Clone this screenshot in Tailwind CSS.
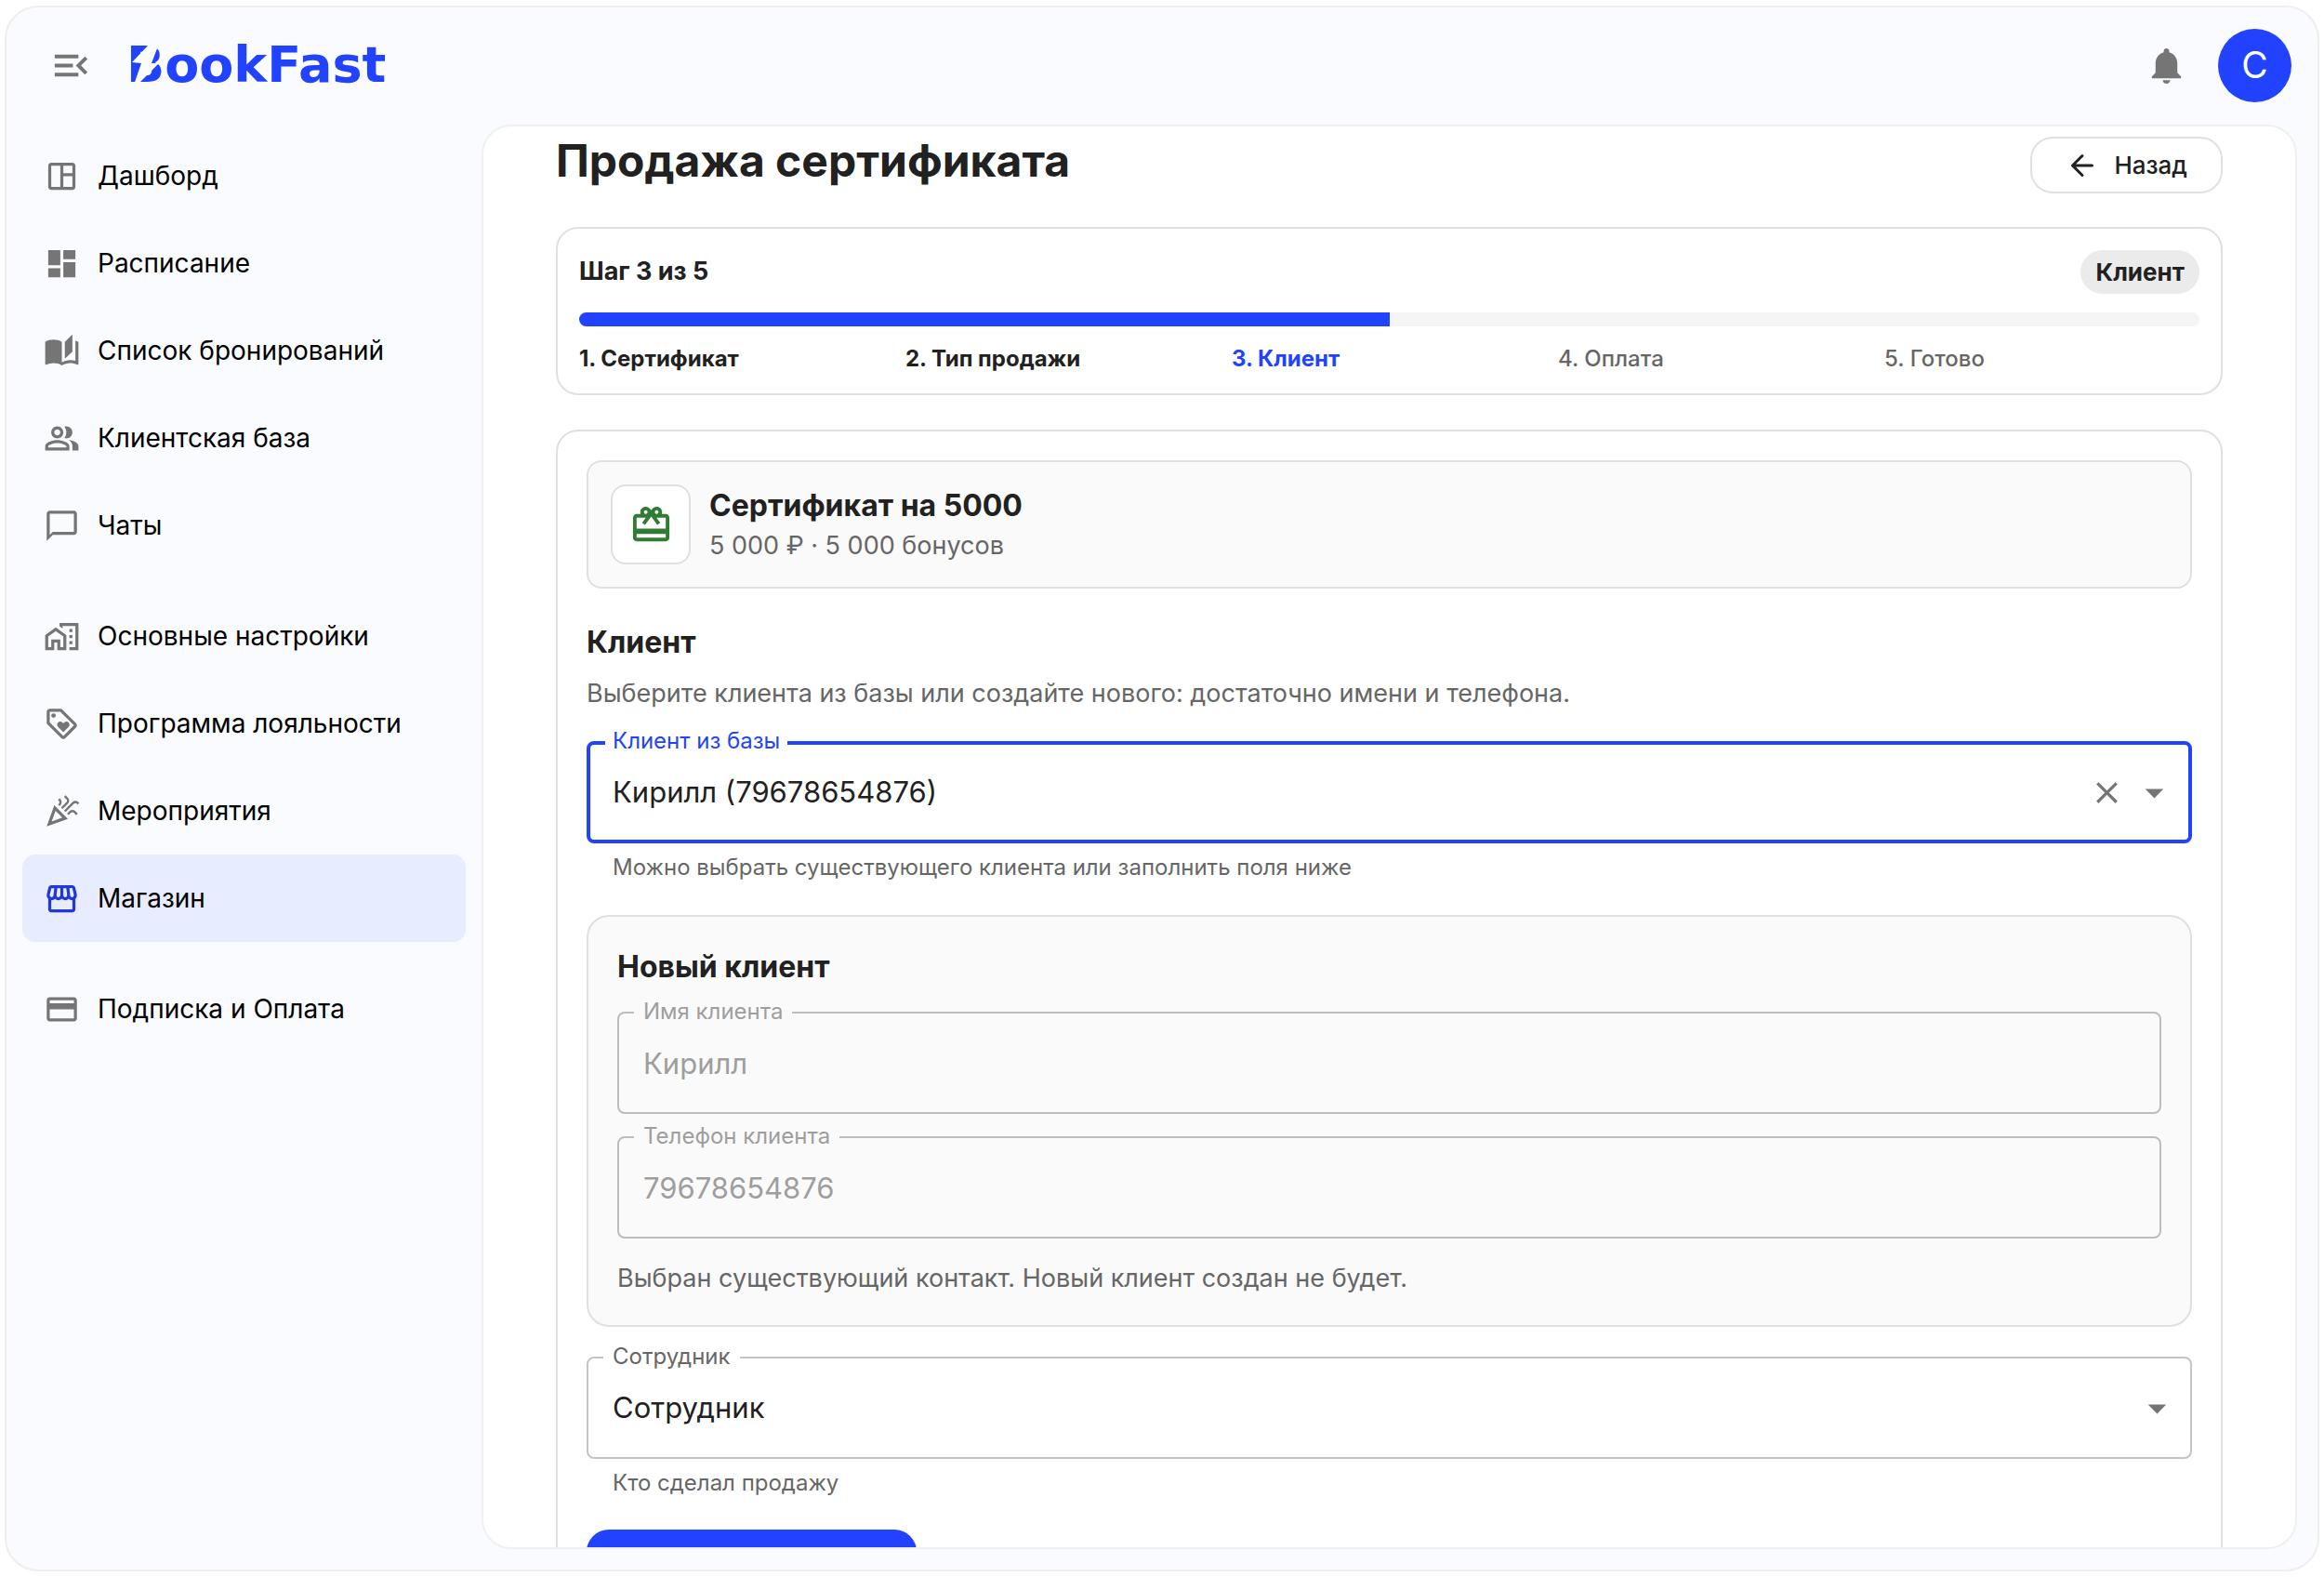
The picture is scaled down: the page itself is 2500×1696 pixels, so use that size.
<!DOCTYPE html>
<html lang="ru">
<head>
    <meta charset="UTF-8">
    <meta name="viewport" content="width=device-width, initial-scale=1.0">
    <title>Продажа сертификата - BookFast</title>
    <script src="https://cdn.jsdelivr.net/npm/@tailwindcss/browser@4"></script>
</head>
<body class="bg-white px-[5px] py-1.5 h-screen overflow-hidden font-['Inter','Liberation_Sans',sans-serif] text-[#212121]">
    <div class="h-full flex flex-col bg-[#fafbff] border-2 border-[#eeeeee] rounded-[36px] overflow-hidden">

        <!-- Header -->
        <header class="h-[126px] shrink-0 flex items-center justify-between pl-[46px] pr-7 pb-0.5">
            <div class="flex items-center gap-9">
                <button type="button" aria-label="Свернуть меню" class="text-[#757575]">
                    <svg class="size-[47px]" viewBox="0 0 24 24" fill="currentColor"><path d="M3 18h13v-2H3v2zm0-5h10v-2H3v2zm0-7v2h13V6H3zm18 9.59L17.42 12 21 8.41 19.59 7l-5 5 5 5L21 15.59z"/></svg>
                </button>
                <a href="#" class="relative font-['DejaVu_Sans',sans-serif] text-[54px] leading-[60px] font-bold text-[#2143ff]">
                    BookFast
                    <svg class="absolute left-0 top-0 w-[40px] h-[60px]" viewBox="0 0 40 60" fill="#fafbff"><path d="M25 7 6 27l10 1L8 51l5-1L35 28h-8l8-21z"/></svg>
                </a>
            </div>
            <div class="flex items-center gap-8">
                <button type="button" aria-label="Уведомления" class="text-[#757575]">
                    <svg class="size-[47px]" viewBox="0 0 24 24" fill="currentColor"><path d="M12 22c1.1 0 2-.9 2-2h-4c0 1.1.89 2 2 2zm6-6v-5c0-3.07-1.64-5.64-4.5-6.32V4c0-.83-.67-1.5-1.5-1.5s-1.5.67-1.5 1.5v.68C7.63 5.36 6 7.92 6 11v5l-2 2v1h16v-1l-2-2z"/></svg>
                </button>
                <button type="button" class="size-[79px] rounded-full bg-[#2143ff] text-white text-[39px]">C</button>
            </div>
        </header>

        <div class="flex flex-1 min-h-0 pr-[22px] pb-[22px]">
            <!-- Sidebar -->
            <nav class="w-[511px] shrink-0 px-[17px] pt-2 text-[28px] text-black">
                <ul class="mb-[25px]">
                    <li><a href="#" class="flex items-center h-[94px] px-[23px] gap-[19px] rounded-[14px]">
                        <svg class="size-[39px] text-[#757575]" viewBox="0 0 24 24" fill="currentColor"><path d="M19 3H5c-1.1 0-2 .9-2 2v14c0 1.1.9 2 2 2h14c1.1 0 2-.9 2-2V5c0-1.1-.9-2-2-2zM5 19V5h6v14H5zm14 0h-6v-7h6v7zm0-9h-6V5h6v5z"/></svg>
                        Дашборд
                    </a></li>
                    <li><a href="#" class="flex items-center h-[94px] px-[23px] gap-[19px] rounded-[14px]">
                        <svg class="size-[39px] text-[#757575]" viewBox="0 0 24 24" fill="currentColor"><path d="M3 13h8V3H3v10zm0 8h8v-6H3v6zm10 0h8V11h-8v10zm0-18v6h8V3h-8z"/></svg>
                        Расписание
                    </a></li>
                    <li><a href="#" class="flex items-center h-[94px] px-[23px] gap-[19px] rounded-[14px]">
                        <svg class="size-[39px] text-[#757575]" viewBox="0 0 24 24" fill="currentColor"><path d="m19 1-5 5v11l5-4.5V1zM1 6v14.65c0 .25.25.5.5.5.1 0 .15-.05.25-.05C3.1 20.45 5.05 20 6.5 20c1.95 0 4.05.4 5.5 1.5V6c-1.45-1.1-3.55-1.5-5.5-1.5S2.45 4.9 1 6zm22 13.5V6c-.6-.45-1.25-.75-2-1v13.5c-1.1-.35-2.3-.5-3.5-.5-1.7 0-4.15.65-5.5 1.5v2c1.35-.85 3.8-1.5 5.5-1.5 1.65 0 3.35.3 4.75 1.05.1.05.15.05.25.05.25 0 .5-.25.5-.5v-1.1z"/></svg>
                        Список бронирований
                    </a></li>
                    <li><a href="#" class="flex items-center h-[94px] px-[23px] gap-[19px] rounded-[14px]">
                        <svg class="size-[39px] text-[#757575]" viewBox="0 0 24 24" fill="currentColor"><path d="M16.67 13.13C18.04 14.06 19 15.32 19 17v3h4v-3c0-2.18-3.57-3.47-6.33-3.87zM15 12c2.21 0 4-1.79 4-4s-1.79-4-4-4c-.47 0-.91.1-1.33.24C14.5 5.27 15 6.58 15 8s-.5 2.73-1.33 3.76c.42.14.86.24 1.33.24zM9 12c2.21 0 4-1.79 4-4s-1.79-4-4-4-4 1.79-4 4 1.79 4 4 4zm0-6c1.1 0 2 .9 2 2s-.9 2-2 2-2-.9-2-2 .9-2 2-2zM9 13c-2.67 0-8 1.34-8 4v3h16v-3c0-2.66-5.33-4-8-4zm6 5H3v-.99C3.2 16.29 6.3 15 9 15s5.8 1.29 6 2v1z"/></svg>
                        Клиентская база
                    </a></li>
                    <li><a href="#" class="flex items-center h-[94px] px-[23px] gap-[19px] rounded-[14px]">
                        <svg class="size-[39px] text-[#757575]" viewBox="0 0 24 24" fill="currentColor"><path d="M20 2H4c-1.1 0-2 .9-2 2v18l4-4h14c1.1 0 2-.9 2-2V4c0-1.1-.9-2-2-2zm0 14H6l-2 2V4h16v12z"/></svg>
                        Чаты
                    </a></li>
                </ul>
                <ul class="mb-[25px]">
                    <li><a href="#" class="flex items-center h-[94px] px-[23px] gap-[19px] rounded-[14px]">
                        <svg class="size-[39px] text-[#757575]" viewBox="0 0 24 24" fill="currentColor"><path d="M17 11h2v2h-2zM17 7h2v2h-2zM17 15h2v2h-2zM10.500 3v2.300l2 1.430V5H21v14h-4v2h6V3zM8 6l-7 5v10h6v-5h2v5h6V11L8 6zm5 13h-2v-5H5v5H3v-7l5-3.500 5 3.500v7z"/></svg>
                        Основные настройки
                    </a></li>
                    <li><a href="#" class="flex items-center h-[94px] px-[23px] gap-[19px] rounded-[14px]">
                        <svg class="size-[39px] text-[#757575]" viewBox="0 0 24 24" fill="currentColor"><path d="M21.41 11.58l-9-9C12.05 2.22 11.55 2 11 2H4c-1.1 0-2 .9-2 2v7c0 .55.22 1.05.59 1.42l9 9c.36.36.86.58 1.41.58s1.05-.22 1.41-.59l7-7c.37-.36.59-.86.59-1.41s-.23-1.06-.59-1.42zM13 20.01 4 11V4h7v-.01l9 9-7 7.02z"/><circle cx="6.5" cy="6.5" r="1.5"/><path d="M8.9 12.55c0 .57.23 1.07.6 1.45l3.5 3.5 3.5-3.5c.37-.37.6-.89.6-1.45 0-1.13-.92-2.05-2.05-2.05-.57 0-1.08.23-1.45.6l-.6.6-.6-.59c-.37-.38-.89-.61-1.45-.61-1.13 0-2.05.92-2.05 2.05z"/></svg>
                        Программа лояльности
                    </a></li>
                    <li><a href="#" class="flex items-center h-[94px] px-[23px] gap-[19px] rounded-[14px]">
                        <svg class="size-[39px] text-[#757575]" viewBox="0 0 24 24" fill="currentColor"><path d="m2 22 14-5-9-9-5 14zm10.350-5.820L5.300 18.700l2.520-7.050 4.530 4.530zM14.530 12.530l5.590-5.590c.49-.49 1.280-.49 1.770 0l.59.59 1.060-1.060-.59-.59c-1.070-1.070-2.820-1.070-3.890 0l-5.590 5.590 1.060 1.060zM10.060 6.880l-.59.59 1.060 1.060.59-.59c1.070-1.070 1.070-2.820 0-3.890l-.59-.59-1.060 1.070.59.59c.48.48.48 1.280 0 1.760zM17.060 11.880l-1.590 1.590 1.060 1.060 1.590-1.590c.49-.49 1.280-.49 1.770 0l1.610 1.610 1.060-1.060-1.610-1.610c-1.080-1.070-2.820-1.070-3.900 0zM15.060 5.880l-3.590 3.590 1.060 1.060 3.590-3.590c1.070-1.070 1.070-2.820 0-3.890l-1.590-1.590-1.060 1.060 1.590 1.590c.49.49.49 1.290 0 1.770z"/></svg>
                        Мероприятия
                    </a></li>
                    <li><a href="#" aria-current="page" class="flex items-center h-[94px] px-[23px] gap-[19px] rounded-[14px] bg-[#e7edff]">
                        <svg class="size-[39px] text-[#2138d6]" viewBox="0 0 24 24" fill="currentColor"><path d="M21.9 8.89l-1.05-4.37c-.22-.9-1-1.52-1.91-1.52H5.05c-.9 0-1.69.63-1.9 1.52L2.1 8.89c-.24 1.02-.02 2.06.62 2.88.08.11.19.19.28.29V19c0 1.1.9 2 2 2h14c1.1 0 2-.9 2-2v-6.94c.09-.09.2-.18.28-.28.64-.82.87-1.87.62-2.89zm-2.99-3.9 1.05 4.37c.1.42.01.84-.25 1.17-.14.18-.44.47-.94.47-.61 0-1.14-.49-1.21-1.14L16.98 5l1.93-.01zM13 5h1.96l.54 4.52c.05.39-.07.78-.33 1.07-.22.26-.54.41-.95.41-.67 0-1.22-.59-1.22-1.31V5zM8.49 9.52 9.04 5H11v4.69c0 .72-.55 1.31-1.29 1.31-.34 0-.65-.15-.89-.41-.25-.29-.37-.68-.33-1.07zm-4.45-.16L5.05 5h1.97l-.58 4.86c-.08.65-.6 1.14-1.21 1.14-.49 0-.8-.29-.93-.47-.27-.32-.36-.75-.26-1.17zM5 19v-6.03c.08.01.15.03.23.03.87 0 1.66-.36 2.24-.95.6.6 1.4.95 2.31.95.87 0 1.65-.36 2.23-.93.59.57 1.39.93 2.29.93.84 0 1.64-.35 2.24-.95.58.59 1.37.95 2.24.95.08 0 .15-.02.23-.03V19H5z"/></svg>
                        Магазин
                    </a></li>
                </ul>
                <ul>
                    <li><a href="#" class="flex items-center h-[94px] px-[23px] gap-[19px] rounded-[14px]">
                        <svg class="size-[39px] text-[#757575]" viewBox="0 0 24 24" fill="currentColor"><path d="M20 4H4c-1.11 0-1.99.89-1.99 2L2 18c0 1.11.89 2 2 2h16c1.11 0 2-.89 2-2V6c0-1.11-.89-2-2-2zm0 14H4v-6h16v6zm0-10H4V6h16v2z"/></svg>
                        Подписка и Оплата
                    </a></li>
                </ul>
            </nav>

            <!-- Content -->
            <main class="flex-1 min-w-0 bg-white border-2 border-[#f0f0f0] rounded-[32px] px-[78px] pt-[11px] overflow-hidden">
                <div class="flex items-start justify-between h-[61px] mb-9">
                    <h1 class="text-[48px] leading-[52px] font-bold">Продажа сертификата</h1>
                    <button type="button" class="flex items-center gap-4 h-[61px] px-9 border-2 border-[#e0e0e0] rounded-[24px] text-[26px] font-medium">
                        <svg class="size-9" viewBox="0 0 24 24" fill="none" stroke="currentColor" stroke-width="2" stroke-linecap="round" stroke-linejoin="round"><path d="M12 19l-7-7 7-7M19 12H5"/></svg>
                        Назад
                    </button>
                </div>

                <!-- Progress -->
                <section class="border-2 border-[#e0e0e0] rounded-[24px] p-[23px] mb-[37px]">
                    <div class="flex items-center justify-between mb-5">
                        <p class="text-[27px] font-bold">Шаг 3 из 5</p>
                        <span class="h-[47px] px-4 rounded-full bg-[#ebebeb] text-[26px] leading-[47px] font-bold">Клиент</span>
                    </div>
                    <div class="h-[15px] rounded-full bg-[#f5f5f5] overflow-hidden mb-5">
                        <div class="h-full bg-[#2143ff]" style="width: 50%"></div>
                    </div>
                    <ol class="grid grid-cols-5 gap-3 text-[24px] leading-[29px] font-bold">
                        <li>1. Сертификат</li>
                        <li>2. Тип продажи</li>
                        <li class="text-[#2143ff]">3. Клиент</li>
                        <li class="font-medium text-[#666666]">4. Оплата</li>
                        <li class="font-medium text-[#666666]">5. Готово</li>
                    </ol>
                </section>

                <!-- Client form -->
                <form class="border-2 border-[#e0e0e0] rounded-[24px] p-[31px]">
                    <div class="flex items-center gap-5 bg-[#fafafa] border-2 border-[#e0e0e0] rounded-[16px] p-6 mb-[35px]">
                        <div class="size-[86px] flex items-center justify-center bg-white border-2 border-[#e0e0e0] rounded-[16px]">
                            <svg class="size-[47px] text-[#2e7d32]" viewBox="0 0 24 24" fill="currentColor"><path d="M20 6h-2.18c.11-.31.18-.65.18-1 0-1.66-1.34-3-3-3-1.05 0-1.96.54-2.5 1.35l-.5.67-.5-.68C10.96 2.54 10.05 2 9 2 7.34 2 6 3.34 6 5c0 .35.07.69.18 1H4c-1.11 0-1.99.89-1.99 2L2 19c0 1.11.89 2 2 2h16c1.11 0 2-.89 2-2V8c0-1.11-.89-2-2-2zm-5-2c.55 0 1 .45 1 1s-.45 1-1 1-1-.45-1-1 .45-1 1-1zM9 4c.55 0 1 .45 1 1s-.45 1-1 1-1-.45-1-1 .45-1 1-1zm11 15H4v-2h16v2zm0-5H4V8h5.08L7 10.83 8.62 12 11 8.76l1-1.36 1 1.36L15.38 12 17 10.83 14.92 8H20v6z"/></svg>
                        </div>
                        <div>
                            <p class="text-[32px] leading-[46px] font-bold">Сертификат на 5000</p>
                            <p class="text-[27px] leading-[40px] text-[#666666]">5 000 ₽ · 5 000 бонусов</p>
                        </div>
                    </div>

                    <h2 class="text-[32px] leading-[46px] font-bold mb-3">Клиент</h2>
                    <p class="text-[27px] leading-[40px] text-[#666666] mb-[31px]">Выберите клиента из базы или создайте нового: достаточно имени и телефона.</p>

                    <div class="relative flex items-center h-[110px] border-4 border-[#2143ff] rounded-[8px] pl-6 pr-[13px] mb-1.5">
                        <label for="client" class="absolute left-4 -top-[22px] px-2 bg-white text-[24px] leading-[36px] text-[#2143ff]">Клиент из базы</label>
                        <input id="client" type="text" role="combobox" aria-expanded="false" value="Кирилл (79678654876)" class="flex-1 min-w-0 text-[31px] outline-none">
                        <button type="button" aria-label="Очистить" class="text-[#757575] mr-2">
                            <svg class="size-[39px]" viewBox="0 0 24 24" fill="currentColor"><path d="M19 6.41L17.59 5 12 10.59 6.41 5 5 6.41 10.59 12 5 17.59 6.41 19 12 13.41 17.59 19 19 17.59 13.41 12z"/></svg>
                        </button>
                        <button type="button" aria-label="Открыть" class="text-[#757575]">
                            <svg class="size-[47px]" viewBox="0 0 24 24" fill="currentColor"><path d="M7 10l5 5 5-5z"/></svg>
                        </button>
                    </div>
                    <p class="px-7 text-[24px] leading-[39px] text-[#666666] mb-8">Можно выбрать существующего клиента или заполнить поля ниже</p>

                    <div class="bg-[#fafafa] border-2 border-[#e0e0e0] rounded-[24px] p-[31px] mb-8">
                        <h3 class="text-[32px] leading-[46px] font-bold mb-[25px]">Новый клиент</h3>
                        <div class="relative h-[110px] border-2 border-[#bdbdbd] rounded-[8px] mb-6">
                            <label for="name" class="absolute left-4 -top-[20px] px-2.5 bg-[#fafafa] text-[24px] leading-[36px] text-[#9e9e9e]">Имя клиента</label>
                            <input id="name" type="text" value="Кирилл" disabled class="w-full h-full px-[26px] text-[31px] text-[#9e9e9e]">
                        </div>
                        <div class="relative h-[110px] border-2 border-[#bdbdbd] rounded-[8px] mb-6">
                            <label for="phone" class="absolute left-4 -top-[20px] px-2.5 bg-[#fafafa] text-[24px] leading-[36px] text-[#9e9e9e]">Телефон клиента</label>
                            <input id="phone" type="tel" value="79678654876" disabled class="w-full h-full px-[26px] text-[31px] text-[#9e9e9e]">
                        </div>
                        <p class="text-[27px] leading-[38px] text-[#666666]">Выбран существующий контакт. Новый клиент создан не будет.</p>
                    </div>

                    <div class="relative h-[110px] border-2 border-[#c4c4c4] rounded-[8px] mb-1.5">
                        <label for="employee" class="absolute left-4 -top-[20px] px-2.5 bg-white text-[24px] leading-[36px] text-[#666666]">Сотрудник</label>
                        <select id="employee" class="w-full h-full px-[26px] text-[31px] appearance-none outline-none">
                            <option>Сотрудник</option>
                        </select>
                        <svg class="absolute right-3 top-[30px] size-[47px] text-[#757575] pointer-events-none" viewBox="0 0 24 24" fill="currentColor"><path d="M7 10l5 5 5-5z"/></svg>
                    </div>
                    <p class="px-7 text-[24px] leading-[39px] text-[#666666] mb-[31px]">Кто сделал продажу</p>

                    <button type="submit" aria-label="Далее" class="w-[355px] h-[79px] rounded-[24px] bg-[#2143ff] shadow-sm"></button>
                </form>
            </main>
        </div>
    </div>
</body>
</html>
